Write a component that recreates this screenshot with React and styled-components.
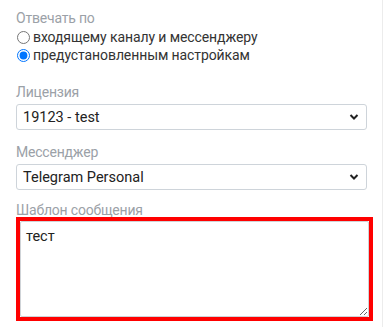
import React, { useState } from 'react';
import styled, { createGlobalStyle } from 'styled-components';

const GlobalStyle = createGlobalStyle`
  html, body {
    margin: 0;
    padding: 0;
    background: #ececec;
  }
  body {
    font-family: Roboto, "Noto Sans", sans-serif;
  }
`;

const Panel = styled.div`
  width: 382px;
  height: 327px;
  box-sizing: border-box;
  background: #fff;
  padding: 8px 0 0 16px;
`;

const Field = styled.div`
  display: flex;
  flex-direction: column;
  width: 351px;
  margin-bottom: ${({ gap }) => gap || 12}px;
`;

const Label = styled.div`
  color: #9ba1a7;
  font-size: 14px;
  letter-spacing: -0.2px;
  line-height: 20px;
  height: 20px;
`;

const RadioRow = styled.label`
  display: flex;
  align-items: center;
  height: 18px;
  color: #333;
  font-size: 14px;
  letter-spacing: -0.1px;
  cursor: pointer;

  input {
    margin: 0 3px 0 1px;
    width: 13px;
    height: 13px;
  }
`;

const SelectBox = styled.div`
  position: relative;
  height: 26px;
  margin-top: 2px;
  border: 1px solid #ced4da;
  border-radius: 3px;
  box-sizing: border-box;
  display: flex;
  align-items: center;
  padding: 0 6px;
  color: #222;
  font-size: 14.5px;

  svg {
    position: absolute;
    right: 7px;
    top: 8px;
  }
`;

const Highlight = styled.div`
  margin-top: -3px;
  width: 357px;
  height: 104px;
  box-sizing: border-box;
  border: 4px solid #f00;
  display: flex;
`;

const TextArea = styled.textarea`
  flex: 1;
  margin: 0;
  border: 1px solid #cfd3d7;
  border-radius: 2px;
  padding: 6px 5px;
  font-family: inherit;
  font-size: 14.5px;
  color: #222;
  resize: vertical;
  outline: none;
`;

const Chevron = () => (
  <svg width="10" height="8" viewBox="0 0 10 8">
    <path d="M1.5 2l3.5 3.5L8.5 2" fill="none" stroke="#222" strokeWidth="2" />
  </svg>
);

const App = () => {
  const [mode, setMode] = useState('preset');

  return (
    <>
      <GlobalStyle />
      <Panel>
        <Field gap={18}>
          <Label>Отвечать по</Label>
          <RadioRow>
            <input type="radio" checked={mode === 'incoming'} onChange={() => setMode('incoming')} />
            входящему каналу и мессенджеру
          </RadioRow>
          <RadioRow>
            <input type="radio" checked={mode === 'preset'} onChange={() => setMode('preset')} />
            предустановленным настройкам
          </RadioRow>
        </Field>
        <Field>
          <Label>Лицензия</Label>
          <SelectBox>
            19123 - test
            <Chevron />
          </SelectBox>
        </Field>
        <Field gap={10}>
          <Label>Мессенджер</Label>
          <SelectBox>
            Telegram Personal
            <Chevron />
          </SelectBox>
        </Field>
        <Field>
          <Label>Шаблон сообщения</Label>
          <Highlight>
            <TextArea defaultValue="тест" />
          </Highlight>
        </Field>
      </Panel>
    </>
  );
};

export default App;
